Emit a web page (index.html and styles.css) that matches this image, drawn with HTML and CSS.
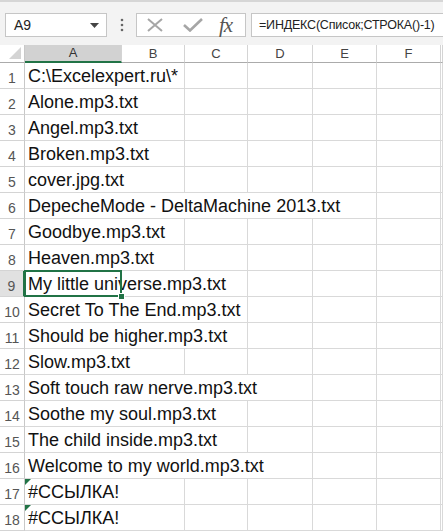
FILE: index.html
```html
<!DOCTYPE html>
<html>
<head>
<meta charset="utf-8">
<link rel="stylesheet" href="styles.css">
</head>
<body>
<div class="toolbar">
  <div class="namebox"><span class="nametext">A9</span><svg class="dd" width="9" height="5" viewBox="0 0 9 5"><path d="M0 0H9L4.5 5Z" fill="#444"/></svg></div>
  <div class="dots"><svg width="4" height="14" viewBox="0 0 4 14"><circle cx="2" cy="2" r="1.3" fill="#666"/><circle cx="2" cy="7" r="1.3" fill="#666"/><circle cx="2" cy="12" r="1.3" fill="#666"/></svg></div>
  <div class="fxbox">
    <svg class="ic-x" width="16" height="14" viewBox="0 0 16 14"><path d="M1 1L15 13M15 1L1 13" stroke="#a6a6a6" stroke-width="2" fill="none"/></svg>
    <svg class="ic-ok" width="20" height="14" viewBox="0 0 20 14"><path d="M1 7L7 12.5L19 1" stroke="#a6a6a6" stroke-width="2.6" fill="none"/></svg>
    <span class="fx">fx</span>
  </div>
  <div class="formula">=ИНДЕКС(Список;СТРОКА()-1)</div>
</div>
<div class="sheet">
  <div class="corner"><svg width="12" height="12" viewBox="0 0 12 12"><path d="M12 0V12H0Z" fill="#d4d4d4"/></svg></div>
  <div class="colh colsel">A</div>
  <div class="colh">B</div>
  <div class="colh">C</div>
  <div class="colh">D</div>
  <div class="colh">E</div>
  <div class="colh">F</div>
  <div class="colh"></div>

  <div class="rowh">1</div><div class="cell a"><span class="t">C:\Excelexpert.ru\*</span></div><div class="cell"></div><div class="cell"></div><div class="cell"></div><div class="cell"></div><div class="cell"></div><div class="cell"></div>
  <div class="rowh">2</div><div class="cell a"><span class="t">Alone.mp3.txt</span></div><div class="cell"></div><div class="cell"></div><div class="cell"></div><div class="cell"></div><div class="cell"></div><div class="cell"></div>
  <div class="rowh">3</div><div class="cell a"><span class="t">Angel.mp3.txt</span></div><div class="cell"></div><div class="cell"></div><div class="cell"></div><div class="cell"></div><div class="cell"></div><div class="cell"></div>
  <div class="rowh">4</div><div class="cell a"><span class="t">Broken.mp3.txt</span></div><div class="cell"></div><div class="cell"></div><div class="cell"></div><div class="cell"></div><div class="cell"></div><div class="cell"></div>
  <div class="rowh">5</div><div class="cell a"><span class="t">cover.jpg.txt</span></div><div class="cell"></div><div class="cell"></div><div class="cell"></div><div class="cell"></div><div class="cell"></div><div class="cell"></div>
  <div class="rowh">6</div><div class="cell a"><span class="t">DepecheMode - DeltaMachine 2013.txt</span></div><div class="cell"></div><div class="cell"></div><div class="cell"></div><div class="cell"></div><div class="cell"></div><div class="cell"></div>
  <div class="rowh">7</div><div class="cell a"><span class="t">Goodbye.mp3.txt</span></div><div class="cell"></div><div class="cell"></div><div class="cell"></div><div class="cell"></div><div class="cell"></div><div class="cell"></div>
  <div class="rowh">8</div><div class="cell a"><span class="t">Heaven.mp3.txt</span></div><div class="cell"></div><div class="cell"></div><div class="cell"></div><div class="cell"></div><div class="cell"></div><div class="cell"></div>
  <div class="rowh rowsel">9</div><div class="cell a sel"><span class="t">My little universe.mp3.txt</span></div><div class="cell"></div><div class="cell"></div><div class="cell"></div><div class="cell"></div><div class="cell"></div><div class="cell"></div>
  <div class="rowh">10</div><div class="cell a"><span class="t">Secret To The End.mp3.txt</span></div><div class="cell"></div><div class="cell"></div><div class="cell"></div><div class="cell"></div><div class="cell"></div><div class="cell"></div>
  <div class="rowh">11</div><div class="cell a"><span class="t">Should be higher.mp3.txt</span></div><div class="cell"></div><div class="cell"></div><div class="cell"></div><div class="cell"></div><div class="cell"></div><div class="cell"></div>
  <div class="rowh">12</div><div class="cell a"><span class="t">Slow.mp3.txt</span></div><div class="cell"></div><div class="cell"></div><div class="cell"></div><div class="cell"></div><div class="cell"></div><div class="cell"></div>
  <div class="rowh">13</div><div class="cell a"><span class="t">Soft touch raw nerve.mp3.txt</span></div><div class="cell"></div><div class="cell"></div><div class="cell"></div><div class="cell"></div><div class="cell"></div><div class="cell"></div>
  <div class="rowh">14</div><div class="cell a"><span class="t">Soothe my soul.mp3.txt</span></div><div class="cell"></div><div class="cell"></div><div class="cell"></div><div class="cell"></div><div class="cell"></div><div class="cell"></div>
  <div class="rowh">15</div><div class="cell a"><span class="t">The child inside.mp3.txt</span></div><div class="cell"></div><div class="cell"></div><div class="cell"></div><div class="cell"></div><div class="cell"></div><div class="cell"></div>
  <div class="rowh">16</div><div class="cell a"><span class="t">Welcome to my world.mp3.txt</span></div><div class="cell"></div><div class="cell"></div><div class="cell"></div><div class="cell"></div><div class="cell"></div><div class="cell"></div>
  <div class="rowh">17</div><div class="cell a err"><span class="t">#ССЫЛКА!</span></div><div class="cell"></div><div class="cell"></div><div class="cell"></div><div class="cell"></div><div class="cell"></div><div class="cell"></div>
  <div class="rowh">18</div><div class="cell a err"><span class="t">#ССЫЛКА!</span></div><div class="cell"></div><div class="cell"></div><div class="cell"></div><div class="cell"></div><div class="cell"></div><div class="cell"></div>
</div>
</body>
</html>
```
FILE: styles.css
```css
html, body {
  margin: 0;
  padding: 0;
  background: #ffffff;
  overflow: hidden;
  font-family: "Liberation Sans", Arial, sans-serif;
}

.toolbar {
  display: flex;
  align-items: flex-start;
  height: 45px;
  box-sizing: border-box;
  padding: 11px 0 0 5px;
  background: #f3f3f3;
  border-top: 2px solid #d6d6d6;
}

.namebox {
  width: 102px;
  height: 24px;
  box-sizing: border-box;
  border: 1px solid #c6c6c6;
  background: #fff;
  display: flex;
  align-items: center;
  justify-content: space-between;
  padding: 0 7px 0 8px;
  font-size: 14px;
  color: #222;
}

.dots {
  width: 29px;
  height: 24px;
  display: flex;
  align-items: center;
  justify-content: center;
}

.fxbox {
  width: 110px;
  height: 24px;
  box-sizing: border-box;
  border: 1px solid #c6c6c6;
  background: #fff;
  display: flex;
  align-items: center;
  padding-left: 10px;
  margin-right: 5px;
}

.ic-x { margin-right: 20px; }
.ic-ok { margin-right: 16px; }

.fx {
  font-family: "Liberation Serif", "Times New Roman", serif;
  font-style: italic;
  font-size: 21px;
  color: #555;
  letter-spacing: -1px;
  line-height: 1;
}

.formula {
  flex: 1;
  min-width: 0;
  height: 24px;
  box-sizing: border-box;
  border: 1px solid #c6c6c6;
  border-right: none;
  background: #fff;
  padding-left: 7px;
  font-size: 12.5px;
  letter-spacing: -0.2px;
  line-height: 22px;
  color: #222;
  white-space: nowrap;
  overflow: hidden;
}

.sheet {
  display: grid;
  grid-template-columns: 25px 97px 63px 63px 65px 64px 64px 1fr;
  grid-template-rows: 18px;
  grid-auto-rows: 26px;
}

.corner {
  background: #fff;
  border-right: 1px solid #c8c8c8;
  border-bottom: 1px solid #ababab;
  display: flex;
  align-items: flex-end;
  justify-content: flex-end;
  padding: 0 3px 3px 0;
  box-sizing: border-box;
}

.colh {
  background: #fff;
  border-right: 1px solid #d4d4d4;
  border-bottom: 1px solid #ababab;
  box-sizing: border-box;
  text-align: center;
  font-size: 13px;
  line-height: 17px;
  color: #444;
}

.colsel {
  background: #d2d2d2;
  border-bottom: 2px solid #217346;
  line-height: 16px;
  color: #333;
}

.rowh {
  background: #fff;
  border-right: 1px solid #c8c8c8;
  border-bottom: 1px solid #d4d4d4;
  box-sizing: border-box;
  font-size: 14px;
  color: #555;
  text-align: center;
  line-height: 30px;
  white-space: nowrap;
}

.rowsel {
  background: #e1e1e1;
  border-right: 2px solid #217346;
}

.cell {
  border-right: 1px solid #d9d9d9;
  border-bottom: 1px solid #d9d9d9;
  box-sizing: border-box;
  min-width: 0;
}

.a {
  position: relative;
  white-space: nowrap;
}

.t {
  position: relative;
  z-index: 1;
  display: inline-block;
  height: 25px;
  background: #fff;
  padding: 0 4px 0 3px;
  font-size: 18px;
  line-height: 27px;
  color: #111;
}

.sel::after {
  content: "";
  position: absolute;
  left: -1px;
  top: -1px;
  right: -1px;
  bottom: -1px;
  border: 2px solid #217346;
  z-index: 2;
}

.sel::before {
  content: "";
  position: absolute;
  right: -4px;
  bottom: -4px;
  width: 5px;
  height: 5px;
  background: #217346;
  border: 1px solid #fff;
  z-index: 3;
}

.err::before {
  content: "";
  position: absolute;
  left: 0;
  top: 0;
  width: 0;
  height: 0;
  border-top: 6px solid #217346;
  border-right: 6px solid transparent;
  z-index: 2;
}
```
